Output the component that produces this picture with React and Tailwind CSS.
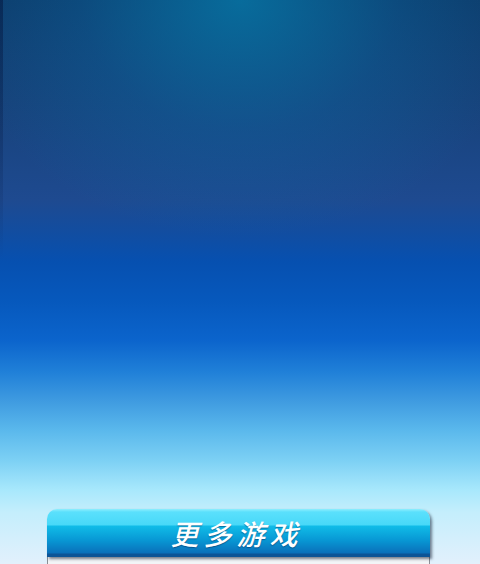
export default function App() {
  return (
    <div className="relative flex h-[564px] w-[480px] flex-col justify-end overflow-hidden bg-[linear-gradient(to_bottom,#0e3b6a_0px,#17427a_100px,#1e4a90_200px,#0650b0_262px,#0658bc_300px,#0b64cc_340px,#2080d8_372px,#3e9ae0_400px,#5ab8ec_430px,#7cd0f4_460px,#a8e8fc_490px,#c4eefc_512px,#e2f0fc_564px)]">
      {/* top glow */}
      <div className="pointer-events-none absolute inset-x-0 top-0 h-[280px] bg-[radial-gradient(ellipse_60%_85%_at_50%_0%,rgba(6,120,168,0.8),rgba(8,110,170,0.3)_55%,rgba(8,110,170,0)_100%)]" />
      <div className="pointer-events-none absolute inset-y-0 left-0 w-[3px] bg-[linear-gradient(to_bottom,rgba(4,20,60,0.5),rgba(4,20,60,0)_260px)]" />

      <div className="relative ml-[47px] flex w-[383px] flex-col">
        <button className="relative flex h-[48px] items-center justify-center overflow-hidden rounded-t-[10px] bg-[linear-gradient(to_bottom,#8eeefe_0px,#5ae0fc_3px,#48d8f8_16px,#10bce8_17px,#0898d4_31px,#0a70ba_44px,#0c5496_45px,#0c5496_48px)] shadow-[2px_2px_3px_rgba(20,30,50,0.55)]">
          <span className="pr-[4px] text-[28px] leading-none font-medium italic tracking-[5px] text-white [font-family:'Noto_Sans_CJK_SC',sans-serif] [text-shadow:0_1px_1px_rgba(0,40,90,0.5)]">
            更多游戏
          </span>
        </button>
        <div className="h-[7px] border-x border-[#8a8f96] bg-[#f2f4f6]" />
      </div>
    </div>
  );
}
